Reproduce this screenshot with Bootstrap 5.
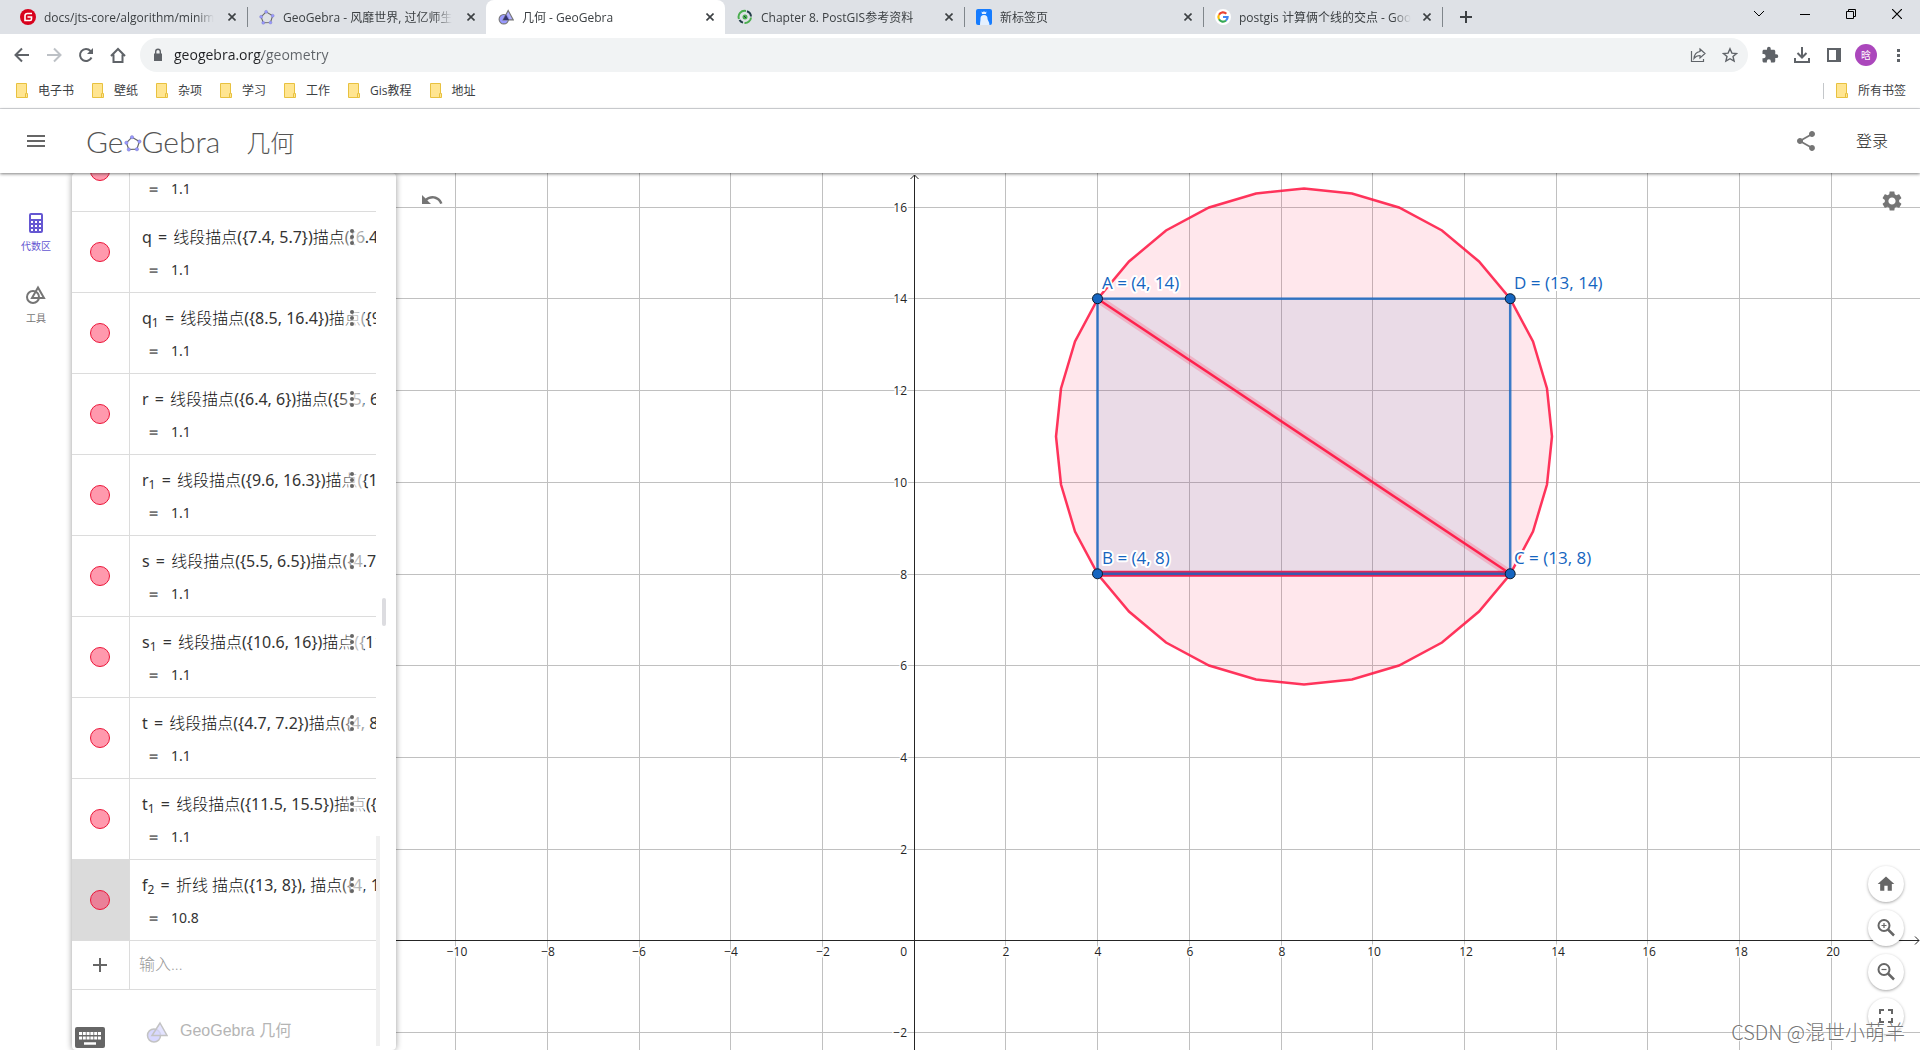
<!DOCTYPE html>
<html lang="zh-CN">
<head>
<meta charset="utf-8">
<meta name="viewport" content="width=device-width, initial-scale=1">
<title>几何 - GeoGebra</title>
<link rel="stylesheet" href="https://cdn.jsdelivr.net/npm/bootstrap@5.3.0/dist/css/bootstrap.min.css">
<style>
:root{--ink:#3c4043;--soft:#757575;--line:#dcdcdc}
body{font-family:"Open Sans","Noto Sans CJK SC",sans-serif;font-size:12px;line-height:16px;color:var(--ink);background:#fff}
button{border:0;background:none;padding:0;color:inherit;display:flex;align-items:center;justify-content:center;flex:none}
a{color:inherit;text-decoration:none}
svg{display:block;flex:none}
/* tab strip */
.strip{height:34px;background:#dee1e6;padding-left:8px}
.tabx{width:239px;height:34px;padding:0 11px 0 12px;position:relative}
.tabx a{overflow:hidden;white-space:nowrap}
.tabx .ttl{overflow:hidden;margin-right:10px;padding-top:1px;-webkit-mask-image:linear-gradient(90deg,#000 calc(100% - 18px),transparent);mask-image:linear-gradient(90deg,#000 calc(100% - 18px),transparent)}
.tabx.sep::after{content:"";position:absolute;right:-1px;top:7px;width:1px;height:20px;background:#80868b}
.tabx.on{background:#fff;border-radius:8px 8px 0 0}
.winbtn{width:46px;height:28px;color:#000}
/* toolbar */
.bar{height:38px;padding:4px 6px 0;color:#5f6368}
.nav32{width:32px;height:32px}
.omni{height:34px;margin:0 6px;border-radius:17px;background:#f1f3f4;padding:0 2px 0 12px}
.omni input{border:0;outline:0;font-size:14px;line-height:20px;padding:0;margin-left:10px;color:transparent;caret-color:#202124;background:linear-gradient(90deg,#202124 88px,#5f6368 88px);-webkit-background-clip:text;background-clip:text}
.avatar{width:22px;height:22px;border-radius:50%;background:#ab47bc;color:#fff;font-size:10px}
.marks{height:37px;padding:1px 14px 0 16px;border-bottom:1px solid #dadce0}
.marks .lst{gap:18px}
.marks a{gap:10px}
.vr1{width:1px;height:16px;background:#c4c7ca}
/* application header */
.apphead{height:64px;padding:0 32px 0 24px;box-shadow:0 1px 3px rgba(0,0,0,.5);z-index:5;position:relative;background:#fff}
.logo{font-family:Lato,sans-serif;font-weight:300;font-size:30px;line-height:32px;color:#555;margin-left:22px}
.appname{font-size:24px;line-height:32px;color:#555;font-weight:300;padding:4px 0 0 26px}
.signin{font-size:16px;line-height:24px;color:#222;font-weight:300;margin-left:38px}
/* side rail */
.rail{width:72px;padding-top:38px;gap:24px;font-size:10px;line-height:14px;background:#fff}
.rail button{flex-direction:column;width:100%;height:48px;gap:4px;color:var(--soft);justify-content:flex-start}
.rail button.cur{color:#6557d2}
/* algebra list */
.alg{width:324px;padding-right:20px;box-shadow:0 0 6px rgba(0,0,0,.4);background:#fff;z-index:2;position:relative;border-radius:4px}
.alg .rows{height:100%;overflow:hidden;justify-content:flex-end}
.item{height:81px;border-bottom:1px solid var(--line);flex:none}
.item .mk{width:58px;border-right:1px solid var(--line);padding-right:1px;display:flex;align-items:center;justify-content:center;flex:none}
.item .mk button{width:20px;height:20px;border-radius:50%;background:#ff99ad;border:1px solid #eb1538}
.item.sel .mk{background:#dbdbdb}
.item.sel .mk button{background:#ea8198}
.item .fx{position:relative;overflow:hidden;white-space:nowrap;padding:13px 0 0 12px;font-family:"Noto Sans","Noto Sans CJK SC",sans-serif;font-size:16px;line-height:24px;color:#333}
.item .fx .cn{color:#111;font-weight:300}
.item .fx .eq{margin:0 2px}
.item .fx sub{font-size:12px;line-height:0}
.item .out{padding:9px 0 0 7px;display:flex;gap:12px;font-size:14px}
.item .out b{width:10px;font-size:16px;color:var(--soft)}
.more{position:absolute;right:12px;top:9px;width:24px;height:32px;background:linear-gradient(90deg,rgba(255,255,255,0),rgba(255,255,255,.75) 60%,rgba(255,255,255,.5));color:#666}
.entry{height:49px}
.entry input{border:0;outline:0;font-size:16px;padding:0 0 2px 9px;width:100%;font-weight:300}
.entry input::placeholder{color:#999;opacity:1}
.foot{height:60px;padding:31px 0 0 74px;gap:12px;font-family:"Liberation Sans","Noto Sans CJK SC",sans-serif;font-size:16px;line-height:20px;color:#b5b5b5;flex:none}
.grip{position:absolute;right:10px;top:425px;width:4px;height:28px;border-radius:2px;background:#dcdce0}
.thumb{position:absolute;right:16px;bottom:4px;width:4px;height:210px;background:#f0f0f0}
.kbd{position:absolute;left:3px;bottom:2px;width:30px;height:21px}
/* graphics view */
.plot{position:relative;overflow:hidden;min-width:0}
.plot>svg{position:absolute;inset:0;width:100%;height:100%}
.tick text{font-size:12px;fill:#252525;stroke:#fff;stroke-width:3px;paint-order:stroke;font-family:"Open Sans",sans-serif}
.names text{font-size:17px;fill:#1565c0;stroke:#fff;stroke-width:4px;stroke-linejoin:round;paint-order:stroke;font-family:"Open Sans",sans-serif}
.undo{position:absolute;left:24px;top:15px;color:var(--soft)}
.gear{position:absolute;right:16px;top:16px;color:var(--soft)}
.zooms{position:absolute;right:16px;bottom:16px;gap:8px}
.zooms button{width:36px;height:36px;border-radius:50%;background:#fff;box-shadow:0 1px 3px rgba(0,0,0,.35);color:#666}
.wm{position:absolute;right:15px;bottom:4px;font:20px/28px "Noto Sans CJK SC",sans-serif;font-weight:300;color:rgba(100,100,100,.9);text-shadow:1px 1px 1px #fff;white-space:nowrap}
</style>
<script src="https://cdn.jsdelivr.net/npm/bootstrap@5.3.0/dist/js/bootstrap.bundle.min.js"></script>
</head>
<body class="vh-100 d-flex flex-column overflow-hidden">
<svg width="0" height="0" class="position-absolute" aria-hidden="true">
  <symbol id="x" viewBox="0 0 8 8"><path d="M.5.5l7 7M7.5.5l-7 7" stroke="#3c4043" stroke-width="1.6"/></symbol>
  <symbol id="folder" viewBox="0 0 12 15"><path d="M.5.5h10v10h1v4H.5z" fill="#ffe591" stroke="#e8c13f"/><path d="M9.500 14v-3.500h1" fill="none" stroke="#e8c13f"/></symbol>
  <symbol id="geo" viewBox="0 0 22 22"><circle cx="8" cy="14" r="6.500" fill="#9999ff" stroke="#777" stroke-width="1.500"/><path d="M14 2l7 13H7z" fill="#9999ff" fill-opacity=".8" stroke="#777" stroke-width="1.500"/><path d="M11 8l4 7H7z" fill="#33336b"/></symbol>
  <symbol id="penta" viewBox="0 0 18 18"><path d="M8 3.200l7.400 4.300-2.500 7.700-8.100.3L2.400 8.800z" fill="none" stroke="#666" stroke-width="1.200"/><g fill="#9999ff" stroke="#7777bb" stroke-width=".4"><circle cx="8" cy="3.200" r="1.700"/><circle cx="15.400" cy="7.500" r="1.700"/><circle cx="12.900" cy="15.200" r="1.700"/><circle cx="4.800" cy="15.500" r="1.700"/><circle cx="2.400" cy="8.800" r="1.700"/></g></symbol>
  <symbol id="dots" viewBox="0 0 4 16"><g fill="currentColor"><circle cx="2" cy="2" r="2"/><circle cx="2" cy="8" r="2"/><circle cx="2" cy="14" r="2"/></g></symbol>
</svg>

<header class="flex-shrink-0">
  <nav class="strip d-flex align-items-center" aria-label="标签页">
    <div class="tabx sep d-flex align-items-center"><a href="#" class="d-flex align-items-center gap-2 flex-grow-1"><svg width="16" height="16" viewBox="0 0 16 16"><circle cx="8" cy="8" r="8" fill="#d8021d"/><path d="M12 4.500H7.200a2.200 2.200 0 0 0-2.200 2.200V11.500h5a1.500 1.500 0 0 0 1.500-1.500V8H7.500" fill="none" stroke="#fff" stroke-width="1.600"/></svg><span class="ttl">docs/jts-core/algorithm/minim</span></a><button aria-label="关闭"><svg width="8" height="8"><use href="#x"/></svg></button></div>
    <div class="tabx d-flex align-items-center"><a href="#" class="d-flex align-items-center gap-2 flex-grow-1"><svg width="16" height="16"><use href="#penta"/></svg><span class="ttl">GeoGebra - 风靡世界, 过亿师生</span></a><button aria-label="关闭"><svg width="8" height="8"><use href="#x"/></svg></button></div>
    <div class="tabx on d-flex align-items-center"><a href="#" class="d-flex align-items-center gap-2 flex-grow-1"><svg width="16" height="16"><use href="#geo"/></svg><span class="ttl flex-grow-1">几何 - GeoGebra</span></a><button aria-label="关闭"><svg width="8" height="8"><use href="#x"/></svg></button></div>
    <div class="tabx sep d-flex align-items-center"><a href="#" class="d-flex align-items-center gap-2 flex-grow-1"><svg width="16" height="16" viewBox="0 0 16 16" fill="none"><path d="M2 10A6 6 0 0 1 9 2" stroke="#4bae4f" stroke-width="2"/><path d="M10 2.300A6 6 0 0 1 14 7.500M6 13.600A6 6 0 0 1 2.500 11" stroke="#243e4a" stroke-width="2"/><path d="M14 8.500A6 6 0 0 1 7.500 14" stroke="#4bae4f" stroke-width="2"/><circle cx="8" cy="8" r="2.500" fill="#4bae4f"/><path d="M7 7l2 2" stroke="#234"/></svg><span class="ttl flex-grow-1">Chapter 8. PostGIS参考资料</span></a><button aria-label="关闭"><svg width="8" height="8"><use href="#x"/></svg></button></div>
    <div class="tabx sep d-flex align-items-center"><a href="#" class="d-flex align-items-center gap-2 flex-grow-1"><svg width="16" height="16" viewBox="0 0 16 16"><rect width="16" height="16" rx="2" fill="#167cff"/><path d="M5.500 2.500l1.500.7 1-1.200 1 1.200 1.500-.7-.5 2.500H6zM4 16c0-3 .5-4 .5-6.500a3.500 3.500 0 0 1 7 0c0 2 2 3 2 6.500z" fill="#e4f0ff"/></svg><span class="ttl flex-grow-1">新标签页</span></a><button aria-label="关闭"><svg width="8" height="8"><use href="#x"/></svg></button></div>
    <div class="tabx sep d-flex align-items-center"><a href="#" class="d-flex align-items-center gap-2 flex-grow-1"><svg width="16" height="16" viewBox="0 0 16 16" fill="none" stroke-width="2.200"><circle cx="8" cy="8" r="8" fill="#fff"/><path d="M4 5.700A4.600 4.600 0 0 1 11.300 4.800" stroke="#ea4335"/><path d="M4 10.300A4.600 4.600 0 0 1 4 5.700" stroke="#fbbc05"/><path d="M11 11.500A4.600 4.600 0 0 1 4 10.300" stroke="#34a853"/><path d="M8 8h4.600A4.600 4.600 0 0 1 11 11.500" stroke="#4285f4"/></svg><span class="ttl">postgis 计算俩个线的交点 - Goo</span></a><button aria-label="关闭"><svg width="8" height="8"><use href="#x"/></svg></button></div>
    <button class="ms-3" aria-label="新标签页"><svg width="14" height="12"><path d="M8 0v12M2 6h12" stroke="#3c4043" stroke-width="2"/></svg></button>
    <div class="ms-auto d-flex align-self-start">
      <button class="winbtn" aria-label="搜索标签页"><svg width="12" height="8" fill="none"><path d="M1 1l5 5 5-5" stroke="#000"/></svg></button>
      <button class="winbtn" aria-label="最小化"><svg width="10" height="10"><path d="M0 5.500h10" stroke="#000"/></svg></button>
      <button class="winbtn" aria-label="还原"><svg width="10" height="10" fill="none"><path d="M.5 2.500h7v7h-7zM2.500 2.500v-2h7v7h-2" stroke="#000"/></svg></button>
      <button class="winbtn" aria-label="关闭窗口"><svg width="10" height="10"><path d="M0 0l10 10M10 0L0 10" stroke="#000" stroke-width="1.200"/></svg></button>
    </div>
  </nav>

  <div class="bar d-flex align-items-center">
    <button class="nav32" aria-label="后退"><svg width="16" height="16" fill="none" stroke="currentColor" stroke-width="2"><path d="M15 8H2M8 1.500L1.500 8 8 14.500"/></svg></button>
    <button class="nav32" aria-label="前进"><svg width="16" height="16" fill="none" stroke="#bdc1c6" stroke-width="2"><path d="M1 8h13M8 1.500L14.500 8 8 14.500"/></svg></button>
    <button class="nav32" aria-label="重新加载"><svg width="16" height="16" fill="none" stroke="currentColor" stroke-width="2"><path d="M13.500 10.500A6 6 0 1 1 12.500 4L14 5.500"/><path d="M15 1v6H9z" fill="currentColor" stroke="none"/></svg></button>
    <button class="nav32" aria-label="主页"><svg width="16" height="16" fill="none" stroke="currentColor" stroke-width="2"><path d="M1 9l7-7 7 7M3.500 7.500V15h9V7.500"/></svg></button>
    <div class="omni d-flex align-items-center flex-grow-1">
      <svg width="12" height="14" viewBox="0 0 12 14"><path d="M2 5.500h8V13H2z" fill="#5f6368"/><path d="M3.700 6V3.500a2.300 2.300 0 0 1 4.600 0V6" fill="none" stroke="#5f6368" stroke-width="1.400"/></svg>
      <input class="flex-grow-1" type="text" value="geogebra.org/geometry" aria-label="地址栏">
      <button class="nav32" aria-label="分享"><svg width="16" height="16" fill="none" stroke="currentColor" stroke-width="1.200"><path d="M1.500 4v10.500h12V12M10 2l5 4.500-5 4.500V8.500c-3 0-4.500 1-6 3 .3-4 2.500-6.500 6-7z"/></svg></button>
      <button class="nav32" aria-label="收藏"><svg width="16" height="16" fill="none" stroke="currentColor" stroke-width="1.400"><path d="M8 1.800l1.900 4.300 4.600.4-3.500 3 1.100 4.600L8 11.700l-4.100 2.400L5 9.500l-3.500-3 4.600-.4z"/></svg></button>
    </div>
    <button class="nav32" aria-label="扩展程序"><svg width="18" height="18" viewBox="0 0 24 24" fill="currentColor"><path d="M20.500 11H19V7c0-1.100-.9-2-2-2h-4V3.500a2.500 2.500 0 0 0-5 0V5H4c-1.100 0-2 .9-2 2v3.800h1.500a2.700 2.700 0 0 1 0 5.400H2V20c0 1.100.9 2 2 2h3.800v-1.500a2.700 2.700 0 0 1 5.400 0V22H17c1.100 0 2-.9 2-2v-4h1.500a2.500 2.500 0 0 0 0-5z"/></svg></button>
    <button class="nav32" aria-label="下载内容"><svg width="16" height="16" fill="none" stroke="currentColor" stroke-width="2"><path d="M8 0v10M3.500 6L8 10.500 12.500 6M1 11v4h14v-4"/></svg></button>
    <button class="nav32" aria-label="侧边栏"><svg width="14" height="14"><path d="M0 0h14v14H0zM2 2v10h7V2z" fill="currentColor" fill-rule="evenodd"/></svg></button>
    <button class="nav32" aria-label="个人资料"><span class="avatar d-flex align-items-center justify-content-center">晗</span></button>
    <button class="nav32" aria-label="菜单"><svg width="3" height="13" fill="currentColor"><path d="M0 0h3v3H0zM0 5h3v3H0zM0 10h3v3H0z"/></svg></button>
  </div>

  <div class="marks d-flex align-items-center">
    <div class="lst d-flex align-items-center">
      <a href="#" class="d-flex align-items-center"><svg width="12" height="15"><use href="#folder"/></svg>电子书</a>
      <a href="#" class="d-flex align-items-center"><svg width="12" height="15"><use href="#folder"/></svg>壁纸</a>
      <a href="#" class="d-flex align-items-center"><svg width="12" height="15"><use href="#folder"/></svg>杂项</a>
      <a href="#" class="d-flex align-items-center"><svg width="12" height="15"><use href="#folder"/></svg>学习</a>
      <a href="#" class="d-flex align-items-center"><svg width="12" height="15"><use href="#folder"/></svg>工作</a>
      <a href="#" class="d-flex align-items-center"><svg width="12" height="15"><use href="#folder"/></svg>Gis教程</a>
      <a href="#" class="d-flex align-items-center"><svg width="12" height="15"><use href="#folder"/></svg>地址</a>
    </div>
    <span class="vr1 ms-auto me-2"></span>
    <a href="#" class="d-flex align-items-center ms-1"><svg width="12" height="15"><use href="#folder"/></svg>所有书签</a>
  </div>

  <div class="apphead d-flex align-items-center">
    <button class="me-3" aria-label="打开菜单"><svg width="24" height="24" fill="#666"><path d="M3 6h18v2H3zM3 11h18v2H3zM3 16h18v2H3z"/></svg></button>
    <a href="#" class="logo d-flex align-items-center"><span>Ge</span><svg width="18" height="18" viewBox="0 0 18 18" class="mt-1"><use href="#penta"/></svg><span>Gebra</span></a>
    <span class="appname">几何</span>
    <button class="ms-auto" aria-label="分享"><svg width="24" height="24" viewBox="0 0 24 24" fill="#757575"><path d="M18 16.080c-.76 0-1.440.3-1.960.77L8.910 12.700c.05-.23.09-.46.09-.7s-.04-.47-.09-.7l7.050-4.110c.54.5 1.250.81 2.040.81 1.660 0 3-1.340 3-3s-1.340-3-3-3-3 1.340-3 3c0 .24.04.47.09.7L8.040 9.810C7.500 9.310 6.790 9 6 9c-1.660 0-3 1.340-3 3s1.340 3 3 3c.79 0 1.500-.31 2.040-.81l7.120 4.160c-.05.21-.08.43-.08.65 0 1.610 1.310 2.920 2.920 2.920s2.920-1.310 2.920-2.920-1.310-2.920-2.920-2.920z"/></svg></button>
    <button class="signin">登录</button>
  </div>
</header>

<main class="flex-grow-1 d-flex overflow-hidden">
  <nav class="rail d-flex flex-column flex-shrink-0">
    <button class="cur"><svg width="24" height="24" viewBox="0 0 24 24"><path fill="currentColor" fill-rule="evenodd" d="M7 2h10a2 2 0 0 1 2 2v16a2 2 0 0 1-2 2H7a2 2 0 0 1-2-2V4a2 2 0 0 1 2-2zM7 4v4h10V4zM7 10v2h2v-2zm4 0v2h2v-2zm4 0v2h2v-2zM7 14v2h2v-2zm4 0v2h2v-2zm4 0v2h2v-2zM7 18v2h2v-2zm4 0v2h2v-2zm4 0v2h2v-2z"/></svg>代数区</button>
    <button><svg width="24" height="24" viewBox="0 0 24 24" fill="none" stroke="currentColor" stroke-width="2"><circle cx="9" cy="14" r="6"/><path d="M14 4.500L20 15H8z"/></svg>工具</button>
  </nav>

  <section class="alg flex-shrink-0">
    <div class="rows d-flex flex-column">
      <div class="item d-flex"><div class="mk"><button aria-label="显示或隐藏"></button></div><div class="fx flex-grow-1"><div>&nbsp;</div><div class="out"><b>=</b>1.1</div></div></div>
      <div class="item d-flex"><div class="mk"><button aria-label="显示或隐藏"></button></div><div class="fx flex-grow-1"><div>q <span class="eq">=</span> <span class="cn">线段描点</span>({7.4, 5.7})<span class="cn">描点</span>({6.4, 6})</div><div class="out"><b>=</b>1.1</div><button class="more" aria-label="更多"><svg width="4" height="16"><use href="#dots"/></svg></button></div></div>
      <div class="item d-flex"><div class="mk"><button aria-label="显示或隐藏"></button></div><div class="fx flex-grow-1"><div>q<sub>1</sub> <span class="eq">=</span> <span class="cn">线段描点</span>({8.5, 16.4})<span class="cn">描点</span>({9.6, 16.3})</div><div class="out"><b>=</b>1.1</div><button class="more" aria-label="更多"><svg width="4" height="16"><use href="#dots"/></svg></button></div></div>
      <div class="item d-flex"><div class="mk"><button aria-label="显示或隐藏"></button></div><div class="fx flex-grow-1"><div>r <span class="eq">=</span> <span class="cn">线段描点</span>({6.4, 6})<span class="cn">描点</span>({5.5, 6.5})</div><div class="out"><b>=</b>1.1</div><button class="more" aria-label="更多"><svg width="4" height="16"><use href="#dots"/></svg></button></div></div>
      <div class="item d-flex"><div class="mk"><button aria-label="显示或隐藏"></button></div><div class="fx flex-grow-1"><div>r<sub>1</sub> <span class="eq">=</span> <span class="cn">线段描点</span>({9.6, 16.3})<span class="cn">描点</span>({10.6, 16})</div><div class="out"><b>=</b>1.1</div><button class="more" aria-label="更多"><svg width="4" height="16"><use href="#dots"/></svg></button></div></div>
      <div class="item d-flex"><div class="mk"><button aria-label="显示或隐藏"></button></div><div class="fx flex-grow-1"><div>s <span class="eq">=</span> <span class="cn">线段描点</span>({5.5, 6.5})<span class="cn">描点</span>({4.7, 7.2})</div><div class="out"><b>=</b>1.1</div><button class="more" aria-label="更多"><svg width="4" height="16"><use href="#dots"/></svg></button></div></div>
      <div class="item d-flex"><div class="mk"><button aria-label="显示或隐藏"></button></div><div class="fx flex-grow-1"><div>s<sub>1</sub> <span class="eq">=</span> <span class="cn">线段描点</span>({10.6, 16})<span class="cn">描点</span>({11.5, 15.5})</div><div class="out"><b>=</b>1.1</div><button class="more" aria-label="更多"><svg width="4" height="16"><use href="#dots"/></svg></button></div></div>
      <div class="item d-flex"><div class="mk"><button aria-label="显示或隐藏"></button></div><div class="fx flex-grow-1"><div>t <span class="eq">=</span> <span class="cn">线段描点</span>({4.7, 7.2})<span class="cn">描点</span>({4, 8})</div><div class="out"><b>=</b>1.1</div><button class="more" aria-label="更多"><svg width="4" height="16"><use href="#dots"/></svg></button></div></div>
      <div class="item d-flex"><div class="mk"><button aria-label="显示或隐藏"></button></div><div class="fx flex-grow-1"><div>t<sub>1</sub> <span class="eq">=</span> <span class="cn">线段描点</span>({11.5, 15.5})<span class="cn">描点</span>({12.3, 14.8})</div><div class="out"><b>=</b>1.1</div><button class="more" aria-label="更多"><svg width="4" height="16"><use href="#dots"/></svg></button></div></div>
      <div class="item sel d-flex"><div class="mk"><button aria-label="显示或隐藏"></button></div><div class="fx flex-grow-1"><div>f<sub>2</sub> <span class="eq">=</span> <span class="cn">折线</span> <span class="cn">描点</span>({13, 8}), <span class="cn">描点</span>({4, 14})</div><div class="out"><b>=</b>10.8</div><button class="more" aria-label="更多"><svg width="4" height="16"><use href="#dots"/></svg></button></div></div>
      <div class="item entry d-flex"><label class="mk" for="cmd" aria-label="新表达式"><svg width="14" height="14"><path d="M7 0v14M0 7h14" stroke="#666" stroke-width="2"/></svg></label><input id="cmd" type="text" placeholder="输入..."></div>
      <div class="foot d-flex align-items-start"><svg width="22" height="22" viewBox="0 0 22 22" opacity=".5"><circle cx="8" cy="14.500" r="6.500" fill="#b3b3ff" stroke="#888" stroke-width="1.500"/><path d="M14 2l7 12.500H6z" fill="#b3b3ff" fill-opacity=".7" stroke="#888" stroke-width="1.500"/></svg><span>GeoGebra 几何</span></div>
    </div>
    <span class="grip"></span><span class="thumb"></span>
    <button class="kbd" aria-label="键盘"><svg width="30" height="21"><rect width="30" height="21" rx="2" fill="#666"/><path d="M4 6.500h22M4 11h22" stroke="#fff" stroke-width="3" stroke-dasharray="3 .8"/><path d="M9 16.500h12" stroke="#fff" stroke-width="2.500"/></svg></button>
  </section>

  <section class="plot flex-grow-1">
    <svg role="img" aria-label="几何绘图区">
      <g transform="translate(-396 -173)">
        <path stroke="#c0c0c0" d="M455.500 0V2000M547.500 0V2000M639.500 0V2000M730.500 0V2000M822.500 0V2000M1005.500 0V2000M1097.500 0V2000M1189.500 0V2000M1281.500 0V2000M1372.500 0V2000M1464.500 0V2000M1556.500 0V2000M1647.500 0V2000M1739.500 0V2000M1831.500 0V2000M0 207.500H4000M0 298.500H4000M0 390.500H4000M0 482.500H4000M0 574.500H4000M0 665.500H4000M0 757.500H4000M0 849.500H4000M0 1032.500H4000"/>
        <path stroke="#252525" fill="none" d="M914.500 175V2000M0 940.500H1919M910.500 179l4-4 4 4M1915 936.500l4 4-4 4"/>
        <g class="tick" text-anchor="middle">
          <text x="457" y="956">−10</text><text x="548" y="956">−8</text><text x="639" y="956">−6</text><text x="731" y="956">−4</text><text x="823" y="956">−2</text><text x="1006" y="956">2</text><text x="1098" y="956">4</text><text x="1190" y="956">6</text><text x="1282" y="956">8</text><text x="1374" y="956">10</text><text x="1466" y="956">12</text><text x="1558" y="956">14</text><text x="1649" y="956">16</text><text x="1741" y="956">18</text><text x="1833" y="956">20</text>
        </g>
        <g class="tick" text-anchor="end">
          <text x="907" y="212">16</text><text x="907" y="303">14</text><text x="907" y="395">12</text><text x="907" y="487">10</text><text x="907" y="579">8</text><text x="907" y="670">6</text><text x="907" y="762">4</text><text x="907" y="854">2</text><text x="907" y="956">0</text><text x="907" y="1037">−2</text>
        </g>
        <g transform="translate(1304 436.500)">
          <polygon fill="#ff1744" fill-opacity=".1" stroke="#ff1744" stroke-opacity=".87" stroke-width="2.500" points="0,-248 48,-243 95,-229 138,-206 175,-175 206,-138 229,-95 243,-48 248,0 243,48 229,95 206,138 175,175 138,206 95,229 48,243 0,248 -48,243 -95,229 -138,206 -175,175 -206,138 -229,95 -243,48 -248,0 -243,-48 -229,-95 -206,-138 -175,-175 -138,-206 -95,-229 -48,-243"/>
        </g>
        <path d="M1097.500 573.800H1510.200" stroke="#f0224f" stroke-width="6"/>
        <rect x="1097.500" y="298.700" width="412.700" height="275.100" fill="#1565c0" fill-opacity=".09" stroke="#1565c0" stroke-opacity=".83" stroke-width="2.500"/>
        <path d="M1097.500 298.700L1510.200 573.800" stroke="#ff1744" stroke-opacity=".2" stroke-width="8"/>
        <path d="M1097.500 298.700L1510.200 573.800" stroke="#ff1744" stroke-opacity=".93" stroke-width="2.500"/>
        <g fill="#1565c0" stroke="#0a1a2c"><circle cx="1097.500" cy="298.700" r="5"/><circle cx="1097.500" cy="573.800" r="5"/><circle cx="1510.200" cy="573.800" r="5"/><circle cx="1510.200" cy="298.700" r="5"/></g>
        <g class="names"><text x="1102" y="289">A = (4, 14)</text><text x="1514" y="289">D = (13, 14)</text><text x="1102" y="564">B = (4, 8)</text><text x="1514" y="564">C = (13, 8)</text></g>
      </g>
    </svg>
    <button class="undo" aria-label="撤销"><svg width="24" height="24" fill="currentColor"><path d="M12.500 8c-2.650 0-5.050.99-6.900 2.600L2 7v9h9l-3.620-3.620c1.390-1.160 3.160-1.880 5.120-1.880 3.540 0 6.550 2.310 7.600 5.500l2.370-.78C21.080 11.030 17.150 8 12.500 8z"/></svg></button>
    <button class="gear" aria-label="设置"><svg width="24" height="24" fill="currentColor"><path d="M19.140 12.940c.04-.3.06-.61.06-.94 0-.32-.02-.64-.07-.94l2.030-1.580c.18-.14.23-.41.12-.61l-1.920-3.320c-.12-.22-.37-.29-.59-.22l-2.390.96c-.5-.38-1.030-.7-1.620-.94l-.36-2.540c-.04-.24-.24-.41-.48-.41h-3.840c-.24 0-.43.17-.47.41l-.36 2.540c-.59.24-1.130.57-1.620.94l-2.390-.96c-.22-.08-.47 0-.59.22L2.740 8.870c-.12.21-.08.47.12.61l2.030 1.580c-.05.3-.09.63-.09.94s.02.64.07.94l-2.030 1.580c-.18.14-.23.41-.12.61l1.920 3.320c.12.22.37.29.59.22l2.390-.96c.5.38 1.030.7 1.620.94l.36 2.540c.05.24.24.41.48.41h3.840c.24 0 .44-.17.47-.41l.36-2.540c.59-.24 1.130-.56 1.620-.94l2.390.96c.22.08.47 0 .59-.22l1.920-3.320c.12-.22.07-.47-.12-.61l-2.010-1.580zM12 15.600c-1.980 0-3.600-1.620-3.600-3.600s1.620-3.600 3.600-3.600 3.600 1.620 3.600 3.600-1.620 3.600-3.600 3.600z"/></svg></button>
    <div class="zooms d-flex flex-column">
      <button aria-label="标准视图"><svg width="20" height="20" viewBox="0 0 24 24" fill="currentColor"><path d="M10 20v-6h4v6h5v-8h3L12 3 2 12h3v8z"/></svg></button>
      <button aria-label="放大"><svg width="20" height="20" fill="none" stroke="currentColor"><circle cx="8" cy="7.500" r="5.500" stroke-width="2"/><path d="M12 11.500l6 6" stroke-width="2.500"/><path d="M8 5v5M5.500 7.500h5" stroke-width="1.200"/></svg></button>
      <button aria-label="缩小"><svg width="20" height="20" fill="none" stroke="currentColor"><circle cx="8" cy="7.500" r="5.500" stroke-width="2"/><path d="M12 11.500l6 6" stroke-width="2.500"/><path d="M5.500 7.500h5" stroke-width="1.200"/></svg></button>
      <button aria-label="全屏"><svg width="14" height="14" fill="none" stroke="currentColor" stroke-width="2"><path d="M1 5V1h4M9 1h4v4M13 9v4H9M5 13H1V9"/></svg></button>
    </div>
    <div class="wm">CSDN @混世小萌羊</div>
  </section>
</main>
</body>
</html>
